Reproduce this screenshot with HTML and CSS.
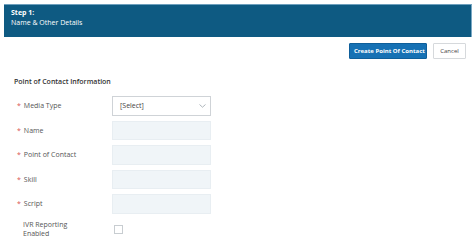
FILE: index.html
```html
<!DOCTYPE html>
<html>
<head>
<meta charset="utf-8">
<link rel="stylesheet" href="styles.css">
</head>
<body>
<div class="page">
  <div class="header">
    <div class="step">Step 1:</div>
    <div class="subtitle">Name &amp; Other Details</div>
  </div>
  <div class="actions">
    <button class="btn btn-primary">Create Point Of Contact</button>
    <button class="btn btn-default">Cancel</button>
  </div>
  <div class="section-title">Point of Contact Information</div>
  <div class="form">
    <div class="row">
      <div class="label"><span class="req">*</span>Media Type</div>
      <div class="select"><span>[Select]</span>
        <svg class="chev" width="7" height="4" viewBox="0 0 7 4"><path d="M0.5 0.5 L3.5 3.2 L6.5 0.5" fill="none" stroke="#9aa3ab" stroke-width="0.8"/></svg>
      </div>
    </div>
    <div class="row">
      <div class="label"><span class="req">*</span>Name</div>
      <div class="input"></div>
    </div>
    <div class="row">
      <div class="label"><span class="req">*</span>Point of Contact</div>
      <div class="input"></div>
    </div>
    <div class="row">
      <div class="label"><span class="req">*</span>Skill</div>
      <div class="input"></div>
    </div>
    <div class="row">
      <div class="label"><span class="req">*</span>Script</div>
      <div class="input"></div>
    </div>
    <div class="row row-check">
      <div class="label label-plain">IVR Reporting<br>Enabled</div>
      <div class="checkbox"></div>
    </div>
  </div>
</div>
</body>
</html>
```
FILE: styles.css
```css
* { box-sizing: border-box; }
html, body { margin: 0; padding: 0; background: #fff; }
body { font-family: "Open Sans", "Liberation Sans", sans-serif; color: #333; }
.page { padding: 4px 2px 0 4px; }
.header {
  height: 33px;
  background: #0e5a82;
  border-top: 1px solid #6d9fbd;
  border-right: 1px solid #7aa8c4;
  padding: 3px 7px 0 7px;
  color: #fff;
  font-size: 7px;
  line-height: 10px;
}
.step { font-weight: 700; }
.actions {
  display: flex;
  justify-content: flex-end;
  gap: 6px;
  margin-top: 6px;
  padding-right: 6px;
}
.btn {
  font-family: "Open Sans", "Liberation Sans", sans-serif;
  font-size: 6px;
  height: 16px;
  padding: 0 4px;
  border-radius: 1px;
  margin: 0;
  white-space: nowrap;
}
.btn-primary {
  background: #1671b4;
  border: 1px solid #0f5f9a;
  color: #fff;
  font-weight: 700;
  width: 78px;
}
.btn-default {
  background: #fff;
  border: 1px solid #d6d9dc;
  color: #444;
  width: 33px;
}
.section-title {
  margin: 18px 0 0 10px;
  font-size: 7px;
  font-weight: 600;
  color: #333;
  line-height: 10px;
}
.form { margin-top: 9px; display: flex; flex-direction: column; gap: 5px; }
.row { display: flex; align-items: center; height: 19.5px; }
.label {
  width: 108px;
  padding-left: 13px;
  font-size: 7px;
  color: #555;
}
.req { color: #d9534f; margin-right: 3px; }
.label-plain { padding-left: 19px; line-height: 9px; padding-top: 1px; }
.select {
  width: 99px;
  height: 20px;
  border: 1px solid #cfd3d7;
  background: #fff;
  display: flex;
  align-items: center;
  justify-content: space-between;
  padding: 0 4px 0 7px;
  font-size: 7px;
  color: #444;
}
.input {
  width: 99px;
  height: 19.5px;
  background: #f0f5f8;
  border: 1px solid #e8eef2;
}
.row-check { height: auto; align-items: flex-start; }
.checkbox {
  width: 9px;
  height: 9px;
  border: 1px solid #c8cdd1;
  background: #fff;
  margin-left: 2px;
  margin-top: 6px;
}
```
